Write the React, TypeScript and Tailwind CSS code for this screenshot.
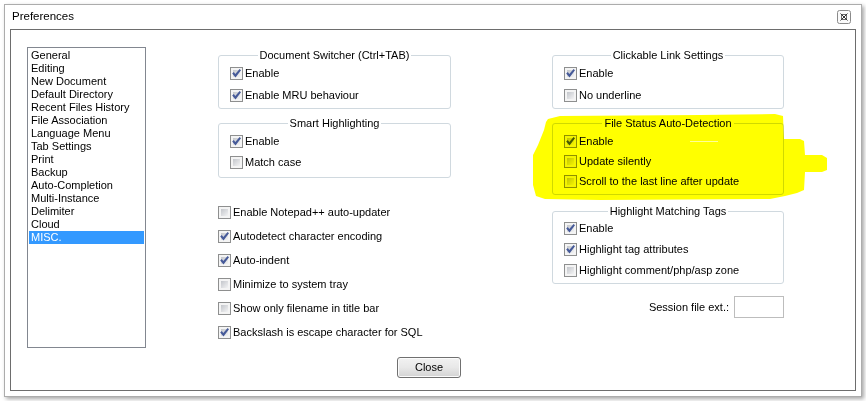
import React from "react";

function Box({ checked }: { checked?: boolean }) {
  return (
    <span className="relative flex h-[13px] w-[13px] shrink-0 border border-[#8e8f8f] bg-[#f4f4f4] p-[2px]">
      <span className="h-full w-full bg-linear-to-br from-[#c3c6cb] to-[#f3f3f4]" />
      {checked && (
        <svg className="absolute left-0 top-0" width="11" height="11" viewBox="0 0 11 11">
          <path d="M1.2 5.6 L2.8 4.1 L4.3 6.1 L8.6 0.9 L10 2.2 L4.5 9.6 Z" fill="#465a99" />
        </svg>
      )}
    </span>
  );
}

function Check({ label, checked, h }: { label: string; checked?: boolean; h: string }) {
  return (
    <div className={`flex items-center gap-[2px] whitespace-nowrap ${h}`}>
      <Box checked={checked} />
      <span>{label}</span>
    </div>
  );
}

function Group({ title, children, className }: { title: string; children: React.ReactNode; className: string }) {
  return (
    <fieldset className={`rounded-[3px] border border-[#d0d9df] ${className}`}>
      <legend className="mx-auto px-[2px] leading-[13px]">{title}</legend>
      {children}
    </fieldset>
  );
}

const items = [
  "General",
  "Editing",
  "New Document",
  "Default Directory",
  "Recent Files History",
  "File Association",
  "Language Menu",
  "Tab Settings",
  "Print",
  "Backup",
  "Auto-Completion",
  "Multi-Instance",
  "Delimiter",
  "Cloud",
  "MISC.",
];

export default function App() {
  return (
    <div className="relative h-[401px] w-[866px] overflow-hidden bg-white font-['Liberation_Sans',Arial,sans-serif] text-[11px] text-black">
      <div className="ml-[4px] mt-[4px] flex h-[393px] w-[858px] flex-col border border-[#acacac] bg-white shadow-[2px_2px_4px_rgba(0,0,0,0.35)]">
        <div className="flex h-[24px] items-center justify-between pl-[7px] pr-[10px]">
          <span className="text-[11.5px]">Preferences</span>
          <svg width="14" height="14" viewBox="0 0 14 14">
            <rect x="0.5" y="0.5" width="13" height="13" rx="2" fill="#fafafa" stroke="#8a8a8a" />
            <rect x="4.5" y="4.5" width="5" height="5" fill="none" stroke="#6a6a6a" />
            <path d="M3.5 3.5 L10.5 10.5 M10.5 3.5 L3.5 10.5" stroke="#333" strokeWidth="1" />
          </svg>
        </div>
        <div className="mx-[5px] mb-[5px] flex flex-1 flex-col border border-[#6d6d6d] pl-[16px] pt-[17px]">
          <div className="flex items-start">
            <div className="h-[301px] w-[119px] shrink-0 border border-[#828790] pt-[1px]">
              {items.map((it) => (
                <div
                  key={it}
                  className={
                    it === "MISC."
                      ? "mx-[1px] h-[13px] bg-[#3399ff] pl-[2px] leading-[13px] text-white"
                      : "mx-[1px] h-[13px] pl-[2px] leading-[13px]"
                  }
                >
                  {it}
                </div>
              ))}
            </div>

            <div className="ml-[72px] mt-[2px] flex w-[233px] shrink-0 flex-col">
              <Group title="Document Switcher (Ctrl+TAB)" className="">
                <div className="pb-[2px] pl-[11px]">
                  <Check label="Enable" checked h="h-[22px]" />
                  <Check label="Enable MRU behaviour" checked h="h-[22px]" />
                </div>
              </Group>
              <Group title="Smart Highlighting" className="mt-[8px]">
                <div className="pb-[4px] pl-[11px] pt-[1px]">
                  <Check label="Enable" checked h="h-[21px]" />
                  <Check label="Match case" h="h-[21px]" />
                </div>
              </Group>
              <div className="mt-[22px] flex flex-col">
                <Check label="Enable Notepad++ auto-updater" h="h-[24px]" />
                <Check label="Autodetect character encoding" checked h="h-[24px]" />
                <Check label="Auto-indent" checked h="h-[24px]" />
                <Check label="Minimize to system tray" h="h-[24px]" />
                <Check label="Show only filename in title bar" h="h-[24px]" />
                <Check label="Backslash is escape character for SQL" checked h="h-[24px]" />
              </div>
            </div>

            <div className="ml-[101px] mt-[2px] flex w-[232px] shrink-0 flex-col">
              <Group title="Clickable Link Settings" className="">
                <div className="pb-[2px] pl-[11px]">
                  <Check label="Enable" checked h="h-[22px]" />
                  <Check label="No underline" h="h-[22px]" />
                </div>
              </Group>
              <Group title="File Status Auto-Detection" className="mt-[8px]">
                <div className="pb-[3px] pl-[11px] pt-[1px]">
                  <Check label="Enable" checked h="h-[20px]" />
                  <Check label="Update silently" h="h-[20px]" />
                  <Check label="Scroll to the last line after update" h="h-[20px]" />
                </div>
              </Group>
              <Group title="Highlight Matching Tags" className="mt-[10px]">
                <div className="pb-[2px] pl-[11px]">
                  <Check label="Enable" checked h="h-[21px]" />
                  <Check label="Highlight tag attributes" checked h="h-[21px]" />
                  <Check label="Highlight comment/php/asp zone" h="h-[21px]" />
                </div>
              </Group>
              <div className="mt-[12px] flex items-center justify-end gap-[5px]">
                <span>Session file ext.:</span>
                <div className="h-[22px] w-[50px] border border-[#bdbdbd] bg-white" />
              </div>
            </div>
          </div>
          <button className="ml-[370px] mt-[9px] flex h-[21px] w-[64px] items-center justify-center rounded-[3px] border border-[#707070] bg-linear-to-b from-[#f2f2f2] via-[#e8e8e8] to-[#d3d3d3] shadow-[inset_0_0_0_1px_#fbfbfb]">
            Close
          </button>
        </div>
      </div>

      <svg
        className="pointer-events-none absolute left-0 top-0 mix-blend-multiply"
        width="866"
        height="401"
        viewBox="0 0 866 401"
      >
        <polygon
          fill="#ffff00"
          points="548,119 560,116 700,115 775,114 783,116 784,139 800,139 804,141 805,155 822,155 827,158 827,170 822,172 805,172 804,190 797,193 785,196 770,199 600,200 545,199 536,196 533,185 533,155 538,145 544,130 546,122"
        />
        <line x1="690" y1="141.5" x2="718" y2="141.5" stroke="#ffffff" strokeOpacity="0.6" strokeWidth="1" />
      </svg>
    </div>
  );
}
